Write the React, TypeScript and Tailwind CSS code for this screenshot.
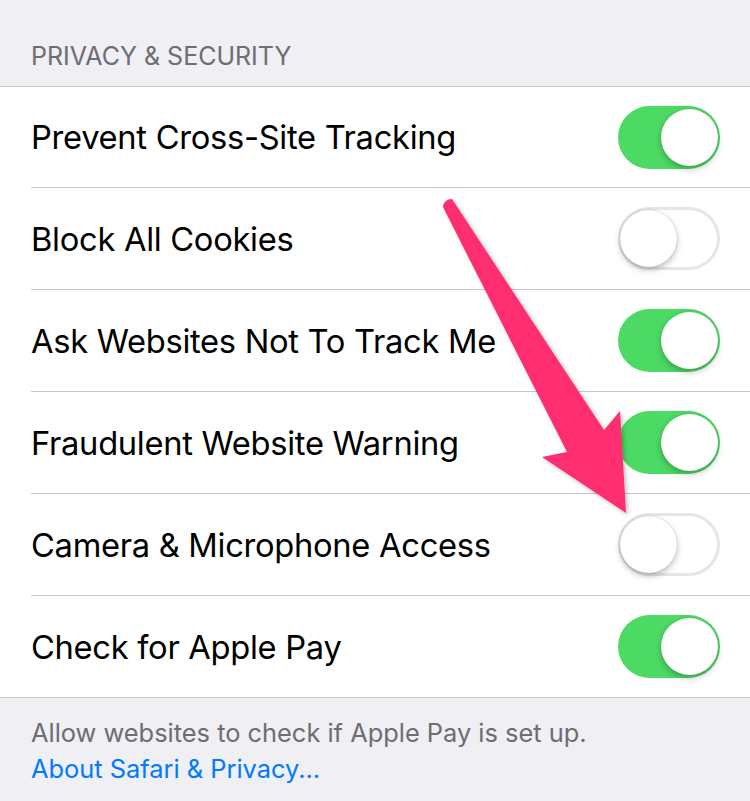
const rows = [
  { label: "Prevent Cross-Site Tracking", on: true },
  { label: "Block All Cookies", on: false },
  { label: "Ask Websites Not To Track Me", on: true },
  { label: "Fraudulent Website Warning", on: true },
  { label: "Camera & Microphone Access", on: false },
  { label: "Check for Apple Pay", on: true },
];

const Toggle = ({ on }: { on: boolean }) => {
  return (
    <div
      className={
        on
          ? "relative w-[102px] h-[63px] rounded-full bg-[#4cd964]"
          : "relative w-[102px] h-[63px] rounded-full border-[3px] border-[#e5e5ea] bg-white"
      }
    >
      <div
        className={
          on
            ? "absolute top-[3px] right-[2px] w-[57px] h-[57px] rounded-full bg-white shadow-[0_3px_6px_rgba(0,0,0,0.25),0_0_1px_rgba(0,0,0,0.2)]"
            : "absolute top-[0px] left-[-1px] w-[57px] h-[57px] rounded-full bg-white shadow-[0_3px_6px_rgba(0,0,0,0.25),0_0_1px_rgba(0,0,0,0.3)]"
        }
      />
    </div>
  );
};

export default function App() {
  return (
    <div
      className="relative w-[750px] h-[801px] bg-[#efeff4] overflow-hidden"
      style={{ fontFamily: "Inter, 'Liberation Sans', sans-serif" }}
    >
      <div className="h-[86px] flex items-end px-[31px] pb-[17px]">
        <span className="text-[25px] leading-none text-[#6d6d72]">
          PRIVACY &amp; SECURITY
        </span>
      </div>

      <div className="bg-white border-t border-b border-[#c8c7cc]">
        {rows.map((row, i) => (
          <div key={row.label} className="pl-[31px]">
            <div
              className={
                i === 0
                  ? "h-[101px] flex items-center justify-between pr-[30px] border-b border-[#c8c7cc]"
                  : i < rows.length - 1
                  ? "h-[102px] flex items-center justify-between pr-[30px] border-b border-[#c8c7cc]"
                  : "h-[101px] flex items-center justify-between pr-[30px]"
              }
            >
              <span className="text-[32.7px] text-black tracking-[-0.3px] mt-[2px]">{row.label}</span>
              <Toggle on={row.on} />
            </div>
          </div>
        ))}
      </div>

      <div className="px-[31px] pt-[17px]">
        <p className="text-[25.4px] leading-[36px] text-[#6d6d72]">
          Allow websites to check if Apple Pay is set up.
        </p>
        <p className="text-[25.4px] leading-[36px] text-[#007aff]">About Safari &amp; Privacy...</p>
      </div>

      <svg
        className="absolute left-0 top-0 pointer-events-none"
        width="750"
        height="801"
        viewBox="0 0 750 801"
      >
        <defs>
          <filter id="sh" x="-20%" y="-20%" width="140%" height="140%">
            <feDropShadow dx="2" dy="2" stdDeviation="2" floodColor="#000" floodOpacity="0.25" />
          </filter>
        </defs>
        <path
          d="M443 207 Q444 199 452 199 L604 430 L620 411 L626 513 L542 457 L567 452 Z"
          fill="#ff2d6f"
          filter="url(#sh)"
        />
      </svg>
    </div>
  );
}
